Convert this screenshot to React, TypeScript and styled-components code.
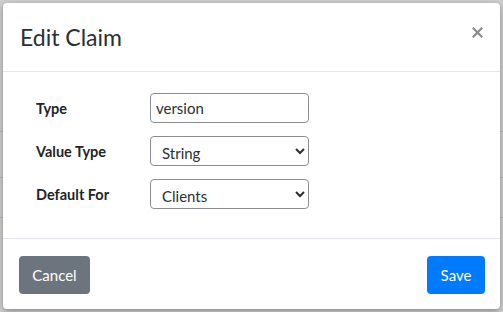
import React from 'react'
import styled, { createGlobalStyle } from 'styled-components'

const GlobalStyle = createGlobalStyle`
  html, body { margin: 0; padding: 0; }
  body { font-family: "Lato", "Liberation Sans", sans-serif; color: #212529; }
  * { box-sizing: border-box; }
`

const Backdrop = styled.div`
  width: 503px; height: 312px; padding: 3px 3px 3px 3px; background-color: #cfcfcf;
  background-image: linear-gradient(to bottom, transparent 131px, #b9b9b9 131px, #b9b9b9 132px, transparent 132px, transparent 177px, #b9b9b9 177px, #b9b9b9 178px, transparent 178px, transparent 217px, #b9b9b9 217px, #b9b9b9 218px, transparent 218px);
  overflow: hidden;
`

const Modal = styled.div`
  display: flex; flex-direction: column; width: 497px; height: 306px; background: #fff; border-radius: 4px;
  box-shadow: 0 2px 6px rgba(0,0,0,.35);
`

const Header = styled.div`
  display: flex; justify-content: space-between; align-items: flex-start; height: 69px; padding: 14px 17px 0 17px; border-bottom: 1px solid #e3e6ea;
`

const Title = styled.h4`
  margin: 0; font-size: 23px; font-weight: 400; line-height: 40px; color: #2b2f33;
`

const Close = styled.button`
  border: 0; background: none; padding: 0; margin: 10px 0 0 0; width: 11px; height: 11px; cursor: pointer; display: flex;
`

const Body = styled.div`
  display: grid; grid-template-columns: 114px 159px; row-gap: 13px; align-items: center; align-content: start;
  height: 167px; padding: 21px 0 0 33px; border-bottom: 1px solid #e3e6ea;
`

const Label = styled.label`
  font-size: 14.5px; font-weight: 700; color: #212529;
`

const fieldCss = `
  width: 159px; height: 30px; border: 1px solid #8a8d91; border-radius: 4px; font-family: "Lato", "Liberation Sans", sans-serif;
  font-size: 15px; color: #2b2f33; background: #fff; outline: none;
`

const Input = styled.input`
  ${fieldCss}
  padding: 0 5px;
`

const Select = styled.select`
  ${fieldCss}
  padding: 4px 6px 0 7px;
`

const Footer = styled.div`
  display: flex; justify-content: space-between; align-items: center; flex: 1; padding: 0 15px 0 16px;
`

const Button = styled.button<{ $variant: 'secondary' | 'primary' }>`
  height: 38px; padding: 0 12px; border: 0; border-radius: 4px; font-family: "Lato", "Liberation Sans", sans-serif; font-size: 15px;
  color: #fff; background-color: ${p => (p.$variant === 'primary' ? '#007bff' : '#6c757d')};
  width: ${p => (p.$variant === 'primary' ? '58px' : '71px')};
  margin-top: 2px;
`

const App: React.FC = () => {
  return (
    <>
      <GlobalStyle />
      <Backdrop>
        <Modal>
          <Header>
            <Title>Edit Claim</Title>
            <Close aria-label="Close">
              <svg width="11" height="11" viewBox="0 0 11 11">
                <path d="M1.5 1.5 L9.5 9.5 M9.5 1.5 L1.5 9.5" stroke="#8b8b8b" strokeWidth="2.2" strokeLinecap="square" />
              </svg>
            </Close>
          </Header>
          <Body>
            <Label>Type</Label>
            <Input defaultValue="version" />
            <Label>Value Type</Label>
            <Select defaultValue="String">
              <option>String</option>
              <option>Int</option>
              <option>Boolean</option>
            </Select>
            <Label>Default For</Label>
            <Select defaultValue="Clients">
              <option>Clients</option>
              <option>Users</option>
            </Select>
          </Body>
          <Footer>
            <Button $variant="secondary">Cancel</Button>
            <Button $variant="primary">Save</Button>
          </Footer>
        </Modal>
      </Backdrop>
    </>
  )
}

export default App
